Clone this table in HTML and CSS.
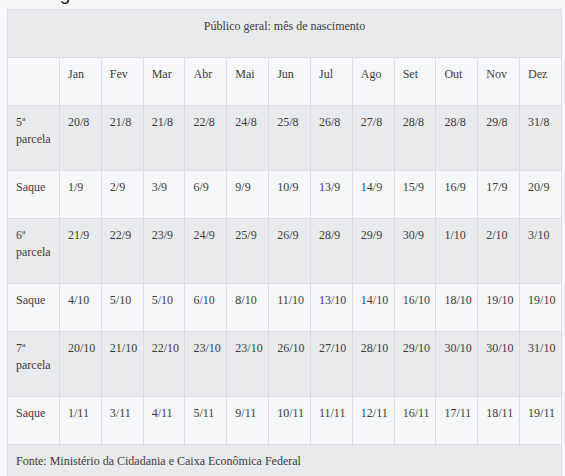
FILE: index.html
```html
<!DOCTYPE html>
<html lang="pt-BR">
<head>
<meta charset="utf-8">
<link rel="stylesheet" href="styles.css">
</head>
<body>
<div class="page">
  <h2 class="heading">Cronograma</h2>
  <div class="float-box"></div>
  <table class="cal">
    <colgroup>
      <col class="c-first">
      <col span="12">
    </colgroup>
    <thead>
      <tr class="grey"><th class="caption" colspan="13">Público geral: mês de nascimento</th></tr>
      <tr class="light">
        <th></th><th>Jan</th><th>Fev</th><th>Mar</th><th>Abr</th><th>Mai</th><th>Jun</th><th>Jul</th><th>Ago</th><th>Set</th><th>Out</th><th>Nov</th><th>Dez</th>
      </tr>
    </thead>
    <tbody>
      <tr class="grey"><td>5ª parcela</td><td>20/8</td><td>21/8</td><td>21/8</td><td>22/8</td><td>24/8</td><td>25/8</td><td>26/8</td><td>27/8</td><td>28/8</td><td>28/8</td><td>29/8</td><td>31/8</td></tr>
      <tr class="light"><td>Saque</td><td>1/9</td><td>2/9</td><td>3/9</td><td>6/9</td><td>9/9</td><td>10/9</td><td>13/9</td><td>14/9</td><td>15/9</td><td>16/9</td><td>17/9</td><td>20/9</td></tr>
      <tr class="grey"><td>6ª parcela</td><td>21/9</td><td>22/9</td><td>23/9</td><td>24/9</td><td>25/9</td><td>26/9</td><td>28/9</td><td>29/9</td><td>30/9</td><td>1/10</td><td>2/10</td><td>3/10</td></tr>
      <tr class="light"><td>Saque</td><td>4/10</td><td>5/10</td><td>5/10</td><td>6/10</td><td>8/10</td><td>11/10</td><td>13/10</td><td>14/10</td><td>16/10</td><td>18/10</td><td>19/10</td><td>19/10</td></tr>
      <tr class="grey"><td>7ª parcela</td><td>20/10</td><td>21/10</td><td>22/10</td><td>23/10</td><td>23/10</td><td>26/10</td><td>27/10</td><td>28/10</td><td>29/10</td><td>30/10</td><td>30/10</td><td>31/10</td></tr>
      <tr class="light"><td>Saque</td><td>1/11</td><td>3/11</td><td>4/11</td><td>5/11</td><td>9/11</td><td>10/11</td><td>11/11</td><td>12/11</td><td>16/11</td><td>17/11</td><td>18/11</td><td>19/11</td></tr>
    </tbody>
    <tfoot>
      <tr class="grey"><td colspan="13">Fonte: Ministério da Cidadania e Caixa Econômica Federal</td></tr>
    </tfoot>
  </table>
</div>
</body>
</html>
```

FILE: styles.css
```css
html, body {
  margin: 0;
  padding: 0;
  background: #f6f7f9;
}
body {
  overflow: hidden;
}
.page {
  position: relative;
  padding: 0 3px 40px 7px;
}
.heading {
  margin: -16px 0 6px 1px;
  font-family: "Liberation Sans", Arial, sans-serif;
  font-weight: normal;
  font-size: 19px;
  line-height: 19px;
  color: #222;
}
.float-box {
  position: absolute;
  left: 474px;
  top: -20px;
  width: 120px;
  height: 32px;
  border: 1px solid #d4d5d8;
  background: #f6f7f9;
}
.cal {
  width: 555px;
  table-layout: fixed;
  border-collapse: collapse;
  font-family: "Liberation Serif", "Times New Roman", serif;
  font-size: 12px;
  line-height: 17px;
  color: #3c3c3c;
  border: 1px solid #dcdde0;
}
.c-first {
  width: 52px;
}
.cal th,
.cal td {
  border: 1px solid #dcdde0;
  padding: 8px 8px 22px 8px;
  text-align: left;
  vertical-align: top;
  font-weight: normal;
  white-space: normal;
}
.cal th.caption {
  text-align: center;
}
.grey > th,
.grey > td {
  background: #e9eaec;
}
.light > th,
.light > td {
  background: #f6f7f9;
}
```
